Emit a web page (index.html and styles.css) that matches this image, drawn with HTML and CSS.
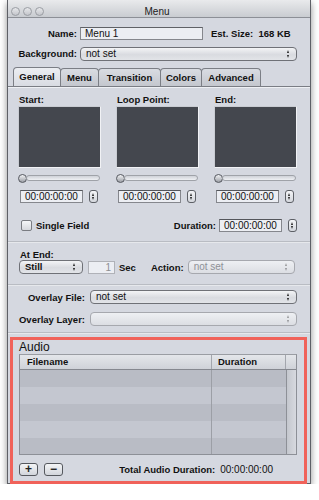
FILE: index.html
```html
<!DOCTYPE html>
<html lang="en">
  <head>
    <meta charset="UTF-8" />
    <title>Menu</title>
    <link rel="stylesheet" href="styles.css">
  </head>
  <body>
    <div class="window">
      <div class="titlebar">
        <div class="lights"><span></span><span></span><span></span></div>
        <div class="title">Menu</div>
      </div>

      <div class="head">
        <div class="row name-row">
          <label class="lbl">Name:</label>
          <div class="text-field name-field">Menu 1</div>
          <span class="est">Est. Size:&nbsp; 168 KB</span>
        </div>
        <div class="row bg-row">
          <label class="lbl">Background:</label>
          <div class="popup wide">not set<span class="arrows"></span></div>
        </div>
        <div class="tabs">
          <div class="tab on" style="width:48px">General</div>
          <div class="tab" style="width:39px">Menu</div>
          <div class="tab" style="width:63px">Transition</div>
          <div class="tab" style="width:42px">Colors</div>
          <div class="tab" style="width:60px">Advanced</div>
        </div>
      </div>

      <div class="panel">
        <div class="thumbs">
          <div class="col">
            <div class="cap">Start:</div>
            <div class="thumb"></div>
            <div class="slider"><span class="knob"></span><span class="track"></span></div>
            <div class="tc-row"><div class="tc">00:00:00:00</div><span class="stepper"></span></div>
          </div>
          <div class="col">
            <div class="cap">Loop Point:</div>
            <div class="thumb"></div>
            <div class="slider"><span class="knob"></span><span class="track"></span></div>
            <div class="tc-row"><div class="tc">00:00:00:00</div><span class="stepper"></span></div>
          </div>
          <div class="col">
            <div class="cap">End:</div>
            <div class="thumb"></div>
            <div class="slider"><span class="knob"></span><span class="track"></span></div>
            <div class="tc-row"><div class="tc">00:00:00:00</div><span class="stepper"></span></div>
          </div>
        </div>

        <div class="check-row">
          <span class="checkbox"></span>
          <span class="b">Single Field</span>
          <span class="spacer"></span>
          <span class="b">Duration:</span>
          <div class="tc">00:00:00:00</div><span class="stepper"></span>
        </div>

        <div class="sep"></div>

        <div class="at-end">At End:</div>
        <div class="end-row">
          <div class="popup still">Still<span class="arrows"></span></div>
          <div class="text-field num">1</div>
          <span class="b sec">Sec</span>
          <span class="b action">Action:</span>
          <div class="popup off action-pop">not set<span class="arrows"></span></div>
        </div>

        <div class="sep"></div>

        <div class="row ov-row">
          <label class="lbl ov">Overlay File:</label>
          <div class="popup ov-pop">not set<span class="arrows"></span></div>
        </div>
        <div class="row ov-row second">
          <label class="lbl ov">Overlay Layer:</label>
          <div class="popup off ov-pop"><span class="arrows"></span></div>
        </div>

        <div class="sep"></div>

        <div class="audio">
          <div class="audio-title">Audio</div>
          <div class="table">
            <div class="thead">
              <div class="th name">Filename</div>
              <div class="th dur">Duration</div>
              <div class="th corner"></div>
            </div>
            <div class="tbody">
              <div class="rows">
                <div class="tr"><span class="c1"></span><span class="c2"></span></div>
                <div class="tr"><span class="c1"></span><span class="c2"></span></div>
                <div class="tr"><span class="c1"></span><span class="c2"></span></div>
                <div class="tr"><span class="c1"></span><span class="c2"></span></div>
                <div class="tr"><span class="c1"></span><span class="c2"></span></div>
              </div>
              <div class="scroll"></div>
            </div>
          </div>
          <div class="audio-foot">
            <span class="sq">+</span>
            <span class="sq">&minus;</span>
            <span class="spacer"></span>
            <span class="b">Total Audio Duration:</span>
            <span class="total">00:00:00:00</span>
          </div>
        </div>
      </div>
    </div>
  </body>
</html>
```

FILE: styles.css
```css
body {
  margin: 0;
  background: #fff;
  font-family: "Liberation Sans", Arial, sans-serif;
  font-size: 10px;
  color: #111;
}
.window {
  margin-left: 7px;
  width: 304px;
  height: 484px;
  box-sizing: border-box;
  border: 1px solid #5e6066;
  border-top: none;
  background: #d5d8e0;
  box-shadow: 0 3px 7px rgba(0, 0, 0, 0.45);
}
.titlebar {
  height: 17px;
  border-bottom: 1px solid #8c8f96;
  background: linear-gradient(#e9eaec, #c9ccd1);
  display: flex;
  align-items: center;
}
.lights {
  display: flex;
  gap: 3px;
  margin-left: 3px;
  margin-top: 5px;
}
.lights span {
  width: 7px;
  height: 7px;
  border-radius: 50%;
  border: 1px solid #9a9da3;
  background: linear-gradient(#e6e7ea, #c4c6cb);
}
.title {
  flex: 1;
  text-align: center;
  margin-right: 40px;
  margin-top: 5px;
  font-size: 10px;
  color: #222;
}
.b {
  font-weight: bold;
  font-size: 9.5px;
}
.row {
  display: flex;
  align-items: center;
}
.lbl {
  width: 69px;
  text-align: right;
  font-weight: bold;
  font-size: 9.5px;
  margin-right: 3px;
}
.name-row {
  margin-top: 9px;
  height: 13px;
}
.text-field {
  height: 13px;
  box-sizing: border-box;
  border: 1px solid #85878d;
  border-top-color: #5f6166;
  background: #eceef3;
  padding-left: 4px;
  line-height: 11px;
  font-size: 10px;
}
.name-field {
  width: 123px;
}
.est {
  margin-left: 8px;
  font-weight: bold;
  font-size: 9.5px;
}
.bg-row {
  margin-top: 7px;
  height: 13px;
}
.popup {
  height: 14px;
  box-sizing: border-box;
  border: 1px solid #6f7177;
  border-radius: 4px;
  background: linear-gradient(#f3f4f6, #d9dbe0 55%, #e2e4e8);
  padding-left: 5px;
  line-height: 12px;
  font-size: 10px;
  display: flex;
  align-items: center;
}
.popup.wide {
  width: 217px;
}
.arrows {
  margin-left: auto;
  margin-right: 5px;
  width: 5px;
  height: 8px;
  position: relative;
}
.arrows::before,
.arrows::after,
.stepper::before,
.stepper::after {
  content: "";
  position: absolute;
  border-left: 1.5px solid transparent;
  border-right: 1.5px solid transparent;
}
.arrows::before,
.arrows::after {
  left: 1px;
}
.arrows::before {
  top: 0;
  border-bottom: 3px solid #222;
}
.arrows::after {
  bottom: 0;
  border-top: 3px solid #222;
}
.popup.off {
  color: #8f9197;
  border-color: #a6a8ae;
  background: linear-gradient(#eef0f3, #dcdee3);
}
.popup.off .arrows {
  opacity: 0.4;
}
.tabs {
  margin-top: 7px;
  padding-left: 5px;
  display: flex;
  height: 19px;
  align-items: flex-end;
}
.tab {
  height: 18px;
  box-sizing: border-box;
  border: 1px solid #7b7e85;
  border-bottom: none;
  border-radius: 4px 4px 0 0;
  margin-right: -1px;
  background: linear-gradient(#d9dce2, #c4c7ce);
  font-weight: bold;
  font-size: 9.5px;
  text-align: center;
  line-height: 17px;
}
.tab.on {
  height: 19px;
  background: linear-gradient(#eceef2, #d8dbe2);
}
.panel {
  border-top: 1px solid #7a7d84;
  box-shadow: inset 0 1px 0 #eef0f4;
}
.thumbs {
  display: flex;
  gap: 15px;
  padding-left: 10px;
}
.col {
  width: 83px;
}
.cap {
  margin-top: 7px;
  height: 12px;
  line-height: 12px;
  padding-left: 1px;
  font-weight: bold;
  font-size: 9.5px;
}
.thumb {
  height: 62px;
  box-sizing: border-box;
  border: 1px solid #f1f2f5;
  border-top-color: #c9ccd2;
  border-left-color: #c9ccd2;
  background: #44474e;
}
.slider {
  margin-top: 5px;
  height: 10px;
  display: flex;
  align-items: center;
}
.knob {
  width: 9px;
  height: 9px;
  box-sizing: border-box;
  border-radius: 50%;
  border: 1px solid #55585f;
  background: linear-gradient(#f2f3f5, #9da0a7);
  flex: none;
}
.track {
  flex: 1;
  height: 4px;
  margin-left: -1px;
  margin-right: 1px;
  border: 1px solid #9fa2a8;
  border-radius: 3px;
  background: linear-gradient(#cfd2d8, #eef0f3);
}
.tc-row {
  margin-top: 7px;
  display: flex;
  align-items: center;
  padding-left: 2px;
}
.tc {
  width: 63px;
  height: 13px;
  box-sizing: border-box;
  border: 1px solid #85878d;
  border-top-color: #54565b;
  background: #eceef3;
  padding-left: 4px;
  line-height: 11px;
  font-size: 10px;
}
.stepper {
  width: 9px;
  height: 13px;
  box-sizing: border-box;
  margin-left: 6px;
  border: 1px solid #5d6066;
  border-radius: 3px;
  background: linear-gradient(#f4f5f7, #d3d6dc);
  position: relative;
}
.stepper::before,
.stepper::after {
  left: 2px;
}
.stepper::before {
  top: 2px;
  border-bottom: 3px solid #222;
}
.stepper::after {
  bottom: 2px;
  border-top: 3px solid #222;
}
.check-row {
  margin-top: 16px;
  height: 13px;
  display: flex;
  align-items: center;
  padding-left: 13px;
  padding-right: 13px;
}
.checkbox {
  width: 11px;
  height: 11px;
  box-sizing: border-box;
  border: 1px solid #7a7c82;
  border-radius: 2px;
  background: linear-gradient(#f5f6f8, #d6d8dd);
  margin-right: 4px;
}
.spacer {
  flex: 1;
}
.check-row .tc {
  margin-left: 3px;
}
.sep {
  height: 1px;
  background: #b9bcc3;
  box-shadow: 0 1px 0 #e6e8ec;
}
.check-row + .sep {
  margin-top: 9px;
}
.at-end {
  margin-top: 7px;
  padding-left: 12px;
  height: 11px;
  line-height: 11px;
  font-weight: bold;
  font-size: 9.5px;
}
.end-row {
  height: 14px;
  display: flex;
  align-items: center;
  padding-left: 11px;
}
.still {
  width: 64px;
  font-weight: bold;
  font-size: 9.5px;
}
.num {
  width: 27px;
  margin-left: 5px;
  text-align: right;
  padding-right: 3px;
  color: #8c8e94;
  border-color: #b0b2b8;
}
.sec {
  margin-left: 4px;
}
.action {
  margin-left: 15px;
}
.action-pop {
  width: 107px;
  margin-left: 4px;
}
.end-row + .sep {
  margin-top: 10px;
}
.ov-row {
  margin-top: 5px;
  height: 14px;
}
.ov-row.second {
  margin-top: 8px;
}
.lbl.ov {
  width: 77px;
  margin-right: 5px;
}
.ov-pop {
  width: 207px;
}
.ov-row.second + .sep {
  margin-top: 6px;
}
.audio {
  margin: 4px 3px 1px 2px;
  border: 3px solid #f0625a;
  padding: 0 7px 5px 6px;
}
.audio-title {
  height: 12px;
  line-height: 12px;
  font-size: 12px;
  margin-top: 1px;
}
.table {
  margin-top: 1px;
  border: 1px solid #8d9097;
  border-top-color: #9a9da3;
}
.thead {
  display: flex;
  height: 14px;
  border-bottom: 1px solid #85888f;
  background: linear-gradient(#e4e6ea, #cfd2d8);
}
.th {
  font-weight: bold;
  font-size: 9.5px;
  line-height: 14px;
  box-sizing: border-box;
}
.th.name {
  width: 192px;
  padding-left: 7px;
  border-right: 1px solid #a3a6ad;
}
.th.dur {
  width: 74px;
  padding-left: 6px;
  border-right: 1px solid #a3a6ad;
}
.th.corner {
  flex: 1;
}
.tbody {
  display: flex;
  height: 84px;
}
.rows {
  width: 266px;
}
.tr {
  display: flex;
  height: 17px;
  background: #b9bcc5;
}
.tr:nth-child(even) {
  background: #c4c7d0;
}
.tr:last-child {
  height: 16px;
}
.c1 {
  width: 192px;
  border-right: 1px solid #9c9fa6;
  box-sizing: border-box;
}
.scroll {
  flex: 1;
  border-left: 1px solid #8d9097;
  background: linear-gradient(to right, #c4c7ce, #d7d9df);
}
.audio-foot {
  margin-top: 8px;
  height: 13px;
  display: flex;
  align-items: center;
  padding-right: 24px;
}
.sq {
  width: 19px;
  height: 13px;
  box-sizing: border-box;
  border: 1px solid #55585e;
  border-radius: 3px;
  background: linear-gradient(#f4f5f7, #d2d5db);
  text-align: center;
  line-height: 11px;
  font-weight: bold;
  font-size: 12px;
  color: #222;
  margin-right: 6px;
}
.b.total-lbl {
  font-size: 10px;
}
.total {
  margin-left: 5px;
  font-size: 10px;
}
```
